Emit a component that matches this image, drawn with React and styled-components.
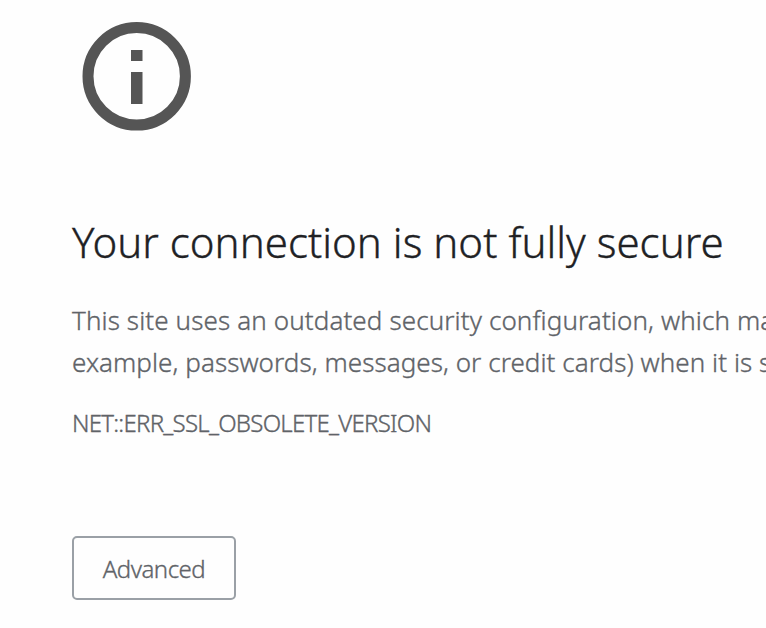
import React from "react";
import styled, { createGlobalStyle } from "styled-components";

const GlobalStyle = createGlobalStyle`
  body {
    margin: 0;
    background: #fefefe;
    overflow: hidden;
  }
`;

const App = () => {
  return (
    <>
      <GlobalStyle />
      <Page>
        <InfoIcon viewBox="0 0 110 110">
          <circle cx="54.7" cy="55.3" r="48.7" />
          <rect x="49" y="29" width="11.5" height="11" />
          <rect x="49" y="51" width="11.5" height="32" />
        </InfoIcon>
        <Title>Your connection is not fully secure</Title>
        <Message>
          <Line $spacing={0.11}>
            This site uses an outdated security configuration, which ma
          </Line>
          <Line $spacing={0.06}>
            example, passwords, messages, or credit cards) when it is s
          </Line>
        </Message>
        <ErrorCode>NET::ERR_SSL_OBSOLETE_VERSION</ErrorCode>
        <AdvancedButton>Advanced</AdvancedButton>
      </Page>
    </>
  );
};

export default App;

const Page = styled.main`
  width: 766px;
  height: 628px;
  box-sizing: border-box;
  padding: 21px 0 0 72px;
  display: flex;
  flex-direction: column;
  align-items: flex-start;
  overflow: hidden;
  background: #fefefe;
  font-family: "Noto Sans", "Open Sans", sans-serif;
  font-weight: 300;
  color: #5f6368;
  -webkit-text-stroke: 0.35px currentColor;
`;

const InfoIcon = styled.svg`
  width: 110px;
  height: 110px;
  margin-left: 10px;
  flex-shrink: 0;

  circle {
    fill: none;
    stroke: #555555;
    stroke-width: 11;
  }

  rect {
    fill: #555555;
  }
`;

const Title = styled.h1`
  margin: 83px 0 0;
  height: 56px;
  line-height: 56px;
  font-size: 42px;
  font-weight: 300;
  letter-spacing: 0.02px;
  color: #202124;
  white-space: nowrap;
`;

const Message = styled.div`
  margin-top: 29px;
  font-size: 26px;
  line-height: 42px;
`;

const Line = styled.div`
  white-space: nowrap;
  letter-spacing: ${(props) => props.$spacing}px;
`;

const ErrorCode = styled.div`
  margin-top: 20px;
  font-size: 24px;
  line-height: 40px;
  letter-spacing: -0.75px;
  white-space: nowrap;
`;

const AdvancedButton = styled.button`
  margin: 93px 0 0;
  width: 164px;
  height: 64px;
  padding: 0;
  border: 2px solid #9aa0a6;
  border-radius: 5px;
  background: #fefefe;
  font-family: inherit;
  font-size: 24px;
  font-weight: 300;
  letter-spacing: -0.5px;
  color: #5f6368;
  -webkit-text-stroke: 0.35px currentColor;
`;
